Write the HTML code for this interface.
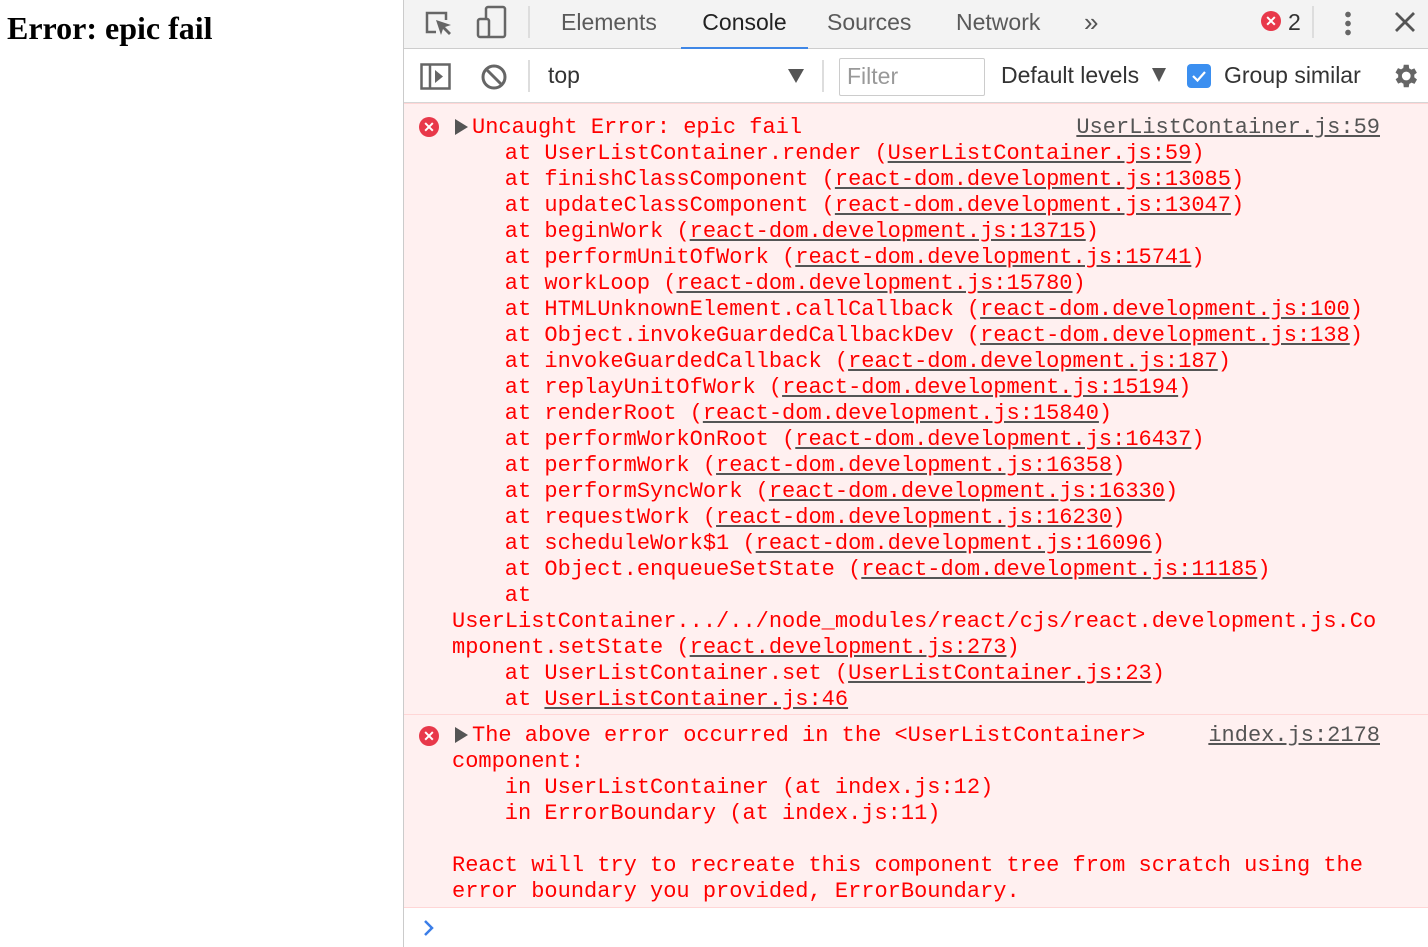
<!DOCTYPE html>
<html><head><meta charset="utf-8"><style>
*{margin:0;padding:0;box-sizing:border-box}
body{width:1428px;height:947px;overflow:hidden;background:#fff;position:relative;font-family:"Liberation Sans",sans-serif}
h1{position:absolute;left:7px;top:10px;font:bold 32px "Liberation Serif",serif;color:#000}
#dt{position:absolute;left:403px;top:0;width:1025px;height:947px;border-left:1px solid #cbcbcb;background:#fff}
.tabs{position:absolute;left:0;top:0;width:1025px;height:49px;background:#f3f3f3;border-bottom:1px solid #cdcdcd}
.tab{position:absolute;top:0;height:49px;line-height:44px;font-size:23px;color:#5a5a5a}
.tb{position:absolute;left:0;top:49px;width:1025px;height:54px;border-bottom:1px solid #d6d6d6;background:#fff}
.t{position:absolute;font-size:23px;color:#333}
.sep{position:absolute;width:2px;background:#ddd}
.l{position:absolute;left:0;white-space:pre;font:22px/26px "Liberation Mono",monospace;color:#f00}
.l u{text-decoration:underline;color:#f00;text-decoration-color:#555}
.r{position:absolute;right:49px;white-space:pre;font:22px/26px "Liberation Mono",monospace;color:#555;text-decoration:underline}
.msg{position:absolute;left:0;width:1025px;background:#fff0f0;border-top:1px solid #ffd6d6;border-bottom:1px solid #ffd6d6}
.ic{position:absolute;left:15px;width:20px;height:20px;border-radius:50%;background:#e8384a;color:#fff;font:bold 14px/20px "Liberation Sans";text-align:center}
.tri{position:absolute;left:51px;width:0;height:0;border-left:13px solid #555;border-top:8px solid transparent;border-bottom:8px solid transparent}
</style></head><body>
<h1>Error: epic fail</h1>
<div id="dt">
<div class="tabs">
<svg style="position:absolute;left:20px;top:8px" width="30" height="30" viewBox="0 0 30 30"><path d="M12 24H3V5h19v7" fill="none" stroke="#666" stroke-width="2.5"/><path d="M12 12l5 15 2-6 6 6 2-2-6-6 6-2z" fill="#666"/></svg>
<svg style="position:absolute;left:72px;top:5px" width="32" height="34" viewBox="0 0 32 34"><rect x="10" y="2" width="19" height="30" rx="2" fill="none" stroke="#666" stroke-width="2.5"/><rect x="2" y="14" width="11" height="18" rx="2" fill="#f3f3f3" stroke="#666" stroke-width="2.5"/></svg>
<div class="sep" style="left:124px;top:6px;height:32px"></div>
<div class="tab" style="left:157px">Elements</div>
<div class="tab" style="left:277px;width:127px;text-align:center;color:#222;border-bottom:3px solid #3f87e6;height:50px">Console</div>
<div class="tab" style="left:423px">Sources</div>
<div class="tab" style="left:552px">Network</div>
<div class="tab" style="left:680px;color:#555;font-size:26px">»</div>
<div style="position:absolute;left:857px;top:11px;width:20px;height:20px;border-radius:50%;background:#e8384a;color:#fff;font:bold 14px/20px 'Liberation Sans';text-align:center">✕</div>
<div class="tab" style="left:884px;color:#333">2</div>
<div class="sep" style="left:908px;top:6px;height:32px"></div>
<div style="position:absolute;left:941px;top:10px;width:6px;height:26px;background:radial-gradient(circle,#666 2.6px,transparent 3px) 0 0/6px 9px"></div>
<svg style="position:absolute;left:990px;top:11px" width="22" height="22"><path d="M2 2L20 20M20 2L2 20" stroke="#555" stroke-width="2.8"/></svg>
</div>
<div class="tb">
<svg style="position:absolute;left:16px;top:14px" width="32" height="28"><rect x="1.5" y="1.5" width="28" height="24" fill="none" stroke="#666" stroke-width="2.5"/><line x1="10" y1="1" x2="10" y2="26" stroke="#666" stroke-width="2.5"/><path d="M15 7l8 6.5-8 6.5z" fill="#666"/></svg>
<svg style="position:absolute;left:76px;top:14px" width="28" height="28"><circle cx="14" cy="14" r="11" fill="none" stroke="#666" stroke-width="3"/><line x1="6" y1="6" x2="22" y2="22" stroke="#666" stroke-width="3"/></svg>
<div class="sep" style="left:124px;top:11px;height:32px"></div>
<div class="t" style="left:144px;top:13px">top</div>
<div style="position:absolute;left:384px;top:20px;border-top:14px solid #555;border-left:8px solid transparent;border-right:8px solid transparent"></div>
<div class="sep" style="left:418px;top:11px;height:32px"></div>
<div style="position:absolute;left:435px;top:9px;width:146px;height:38px;border:1px solid #ccc;border-radius:2px"></div>
<div class="t" style="left:443px;top:14px;color:#999">Filter</div>
<div class="t" style="left:597px;top:13px">Default levels</div>
<div style="position:absolute;left:748px;top:19px;border-top:14px solid #555;border-left:7px solid transparent;border-right:7px solid transparent"></div>
<div style="position:absolute;left:783px;top:15px;width:24px;height:24px;border-radius:4px;background:#3b8ff0"><svg width="24" height="24"><path d="M6 12l4.5 4.5L18 8" fill="none" stroke="#fff" stroke-width="2.2"/></svg></div>
<div class="t" style="left:820px;top:13px">Group similar</div>
<svg style="position:absolute;left:986px;top:12px" width="30" height="30" viewBox="0 0 24 24"><path fill="#666" d="M19.4 13a7.5 7.5 0 000-2l2.1-1.6-2-3.5-2.5 1a7 7 0 00-1.7-1L15 3h-4l-.4 2.7a7 7 0 00-1.7 1l-2.5-1-2 3.5L6.6 11a7.5 7.5 0 000 2l-2.1 1.6 2 3.5 2.5-1a7 7 0 001.7 1L11 21h4l.4-2.7a7 7 0 001.7-1l2.5 1 2-3.5zM13 15.5a3.5 3.5 0 110-7 3.5 3.5 0 010 7z"/></svg>
</div>

<div class="msg" style="top:103px;height:612px">
<div class="ic" style="top:13px">✕</div><div class="tri" style="top:15px"></div>
<div class="r" style="top:11px">UserListContainer.js:59</div>
<div style="position:absolute;left:48px;top:11px">
<div class="l" style="top:0;left:20px">Uncaught Error: epic fail</div>
<div class="l" style="top:26px">    at UserListContainer.render (<u>UserListContainer.js:59</u>)</div>
<div class="l" style="top:52px">    at finishClassComponent (<u>react-dom.development.js:13085</u>)</div>
<div class="l" style="top:78px">    at updateClassComponent (<u>react-dom.development.js:13047</u>)</div>
<div class="l" style="top:104px">    at beginWork (<u>react-dom.development.js:13715</u>)</div>
<div class="l" style="top:130px">    at performUnitOfWork (<u>react-dom.development.js:15741</u>)</div>
<div class="l" style="top:156px">    at workLoop (<u>react-dom.development.js:15780</u>)</div>
<div class="l" style="top:182px">    at HTMLUnknownElement.callCallback (<u>react-dom.development.js:100</u>)</div>
<div class="l" style="top:208px">    at Object.invokeGuardedCallbackDev (<u>react-dom.development.js:138</u>)</div>
<div class="l" style="top:234px">    at invokeGuardedCallback (<u>react-dom.development.js:187</u>)</div>
<div class="l" style="top:260px">    at replayUnitOfWork (<u>react-dom.development.js:15194</u>)</div>
<div class="l" style="top:286px">    at renderRoot (<u>react-dom.development.js:15840</u>)</div>
<div class="l" style="top:312px">    at performWorkOnRoot (<u>react-dom.development.js:16437</u>)</div>
<div class="l" style="top:338px">    at performWork (<u>react-dom.development.js:16358</u>)</div>
<div class="l" style="top:364px">    at performSyncWork (<u>react-dom.development.js:16330</u>)</div>
<div class="l" style="top:390px">    at requestWork (<u>react-dom.development.js:16230</u>)</div>
<div class="l" style="top:416px">    at scheduleWork$1 (<u>react-dom.development.js:16096</u>)</div>
<div class="l" style="top:442px">    at Object.enqueueSetState (<u>react-dom.development.js:11185</u>)</div>
<div class="l" style="top:468px">    at</div>
<div class="l" style="top:494px">UserListContainer.../../node_modules/react/cjs/react.development.js.Co</div>
<div class="l" style="top:520px">mponent.setState (<u>react.development.js:273</u>)</div>
<div class="l" style="top:546px">    at UserListContainer.set (<u>UserListContainer.js:23</u>)</div>
<div class="l" style="top:572px">    at <u>UserListContainer.js:46</u></div>
</div>
</div>

<div class="msg" style="top:714px;height:194px">
<div class="ic" style="top:11px">✕</div><div class="tri" style="top:12px"></div>
<div class="r" style="top:8px">index.js:2178</div>
<div style="position:absolute;left:48px;top:8px">
<div class="l" style="top:0;left:20px">The above error occurred in the &lt;UserListContainer&gt;</div>
<div class="l" style="top:26px">component:</div>
<div class="l" style="top:52px">    in UserListContainer (at index.js:12)</div>
<div class="l" style="top:78px">    in ErrorBoundary (at index.js:11)</div>
<div class="l" style="top:130px">React will try to recreate this component tree from scratch using the</div>
<div class="l" style="top:156px">error boundary you provided, ErrorBoundary.</div>
</div>
</div>
<svg style="position:absolute;left:18px;top:919px" width="14" height="18"><path d="M3 2l7 7-7 7" fill="none" stroke="#3b7ee8" stroke-width="2.5"/></svg>
</div>
</body></html>
